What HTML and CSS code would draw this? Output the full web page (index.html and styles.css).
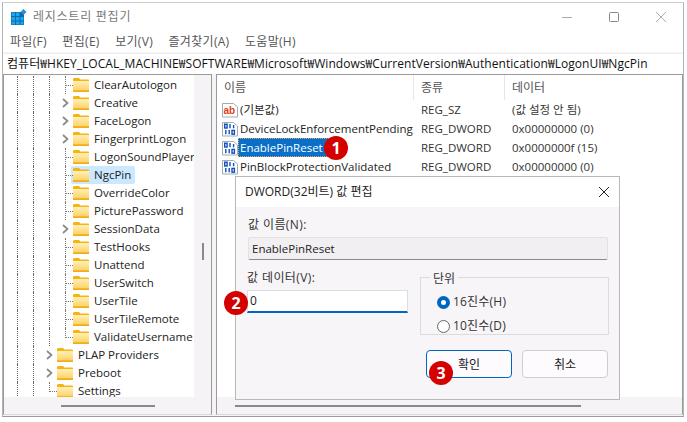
FILE: index.html
```html
<!DOCTYPE html>
<html lang="ko">
<head>
<meta charset="utf-8">
<title>레지스트리 편집기</title>
<link rel="stylesheet" href="styles.css">
</head>
<body>
<svg class="defs" width="0" height="0">
  <defs>
    <linearGradient id="fg" x1="0" y1="0" x2="0" y2="1"><stop offset="0" stop-color="#fff0b8"/><stop offset="1" stop-color="#fdd264"/></linearGradient>
    <symbol id="folder" viewBox="0 0 16 14">
      <path d="M0 1.5C0 .7.6 0 1.5 0H6l1.5 1.5H15c.6 0 1 .4 1 1V13c0 .6-.4 1-1 1H1c-.6 0-1-.4-1-1z" fill="#f5b510"/>
      <rect x="0" y="3" width="16" height="9.6" fill="url(#fg)"/>
      <rect x="0" y="12.4" width="16" height="1.6" fill="#f0ae1e"/>
    </symbol>
    <symbol id="bin" viewBox="0 0 16 16">
      <path d="M.5 1.5h11l4 3.5v10h-15z" fill="#fff" stroke="#a4a9b2"/>
      <g fill="none" stroke="#0f4fc0" stroke-width="1.4">
        <rect x="2.7" y="3.2" width="2.4" height="3.8"/><path d="M8 3v4.2M11.6 4v3.2"/>
        <path d="M3.8 9v4.2M7.2 9v4.2"/><rect x="10" y="9.4" width="2.4" height="3.8"/>
      </g>
    </symbol>
    <symbol id="chev" viewBox="0 0 12 18">
      <path d="M2 5l4.5 4L2 13" fill="none" stroke="#8a8a8a" stroke-width="1.7"/>
    </symbol>
  </defs>
</svg>

<div class="window">
  <header class="titlebar">
    <svg class="appicon" width="16" height="16" viewBox="0 0 16 16">
      <rect x="0" y="3" width="13" height="13" fill="#0b6aa8"/>
      <g fill="#1ba6ee">
        <rect x=".5" y="3.5" width="3.5" height="3.5"/><rect x="5" y="3.5" width="3.5" height="3.5"/>
        <rect x=".5" y="8" width="3.5" height="3.5"/><rect x="5" y="8" width="3.5" height="3.5"/><rect x="9.5" y="8" width="3" height="3.5"/>
        <rect x=".5" y="12.5" width="3.5" height="3"/><rect x="5" y="12.5" width="3.5" height="3"/><rect x="9.5" y="12.5" width="3" height="3"/>
      </g>
      <path d="M12.5 0l3 3-3 3-3-3z" fill="#2b8fd0"/>
    </svg>
    <span class="title">레지스트리 편집기</span>
    <div class="controls">
      <svg width="12" height="12" viewBox="0 0 12 12"><path d="M1 6.5h10" stroke="#aaa" fill="none"/></svg>
      <svg width="12" height="12" viewBox="0 0 12 12"><rect x="1.5" y="1.5" width="9" height="9" rx="1" stroke="#888" fill="none"/></svg>
      <svg width="12" height="12" viewBox="0 0 12 12"><path d="M1 1l10 10M11 1L1 11" stroke="#aaa" fill="none"/></svg>
    </div>
  </header>

  <nav class="menubar">
    <span>파일(F)</span><span>편집(E)</span><span>보기(V)</span><span>즐겨찾기(A)</span><span>도움말(H)</span>
  </nav>

  <div class="address">컴퓨터₩HKEY_LOCAL_MACHINE₩SOFTWARE₩Microsoft₩Windows₩CurrentVersion₩Authentication₩LogonUI₩NgcPin</div>

  <main class="panes">
    <section class="pane tree-pane">
      <div class="pane-body">
        <div class="tree">
          <div class="row"><i class="g"></i><i class="g"></i><i class="g"></i><i class="b"></i><svg class="fo"><use href="#folder"/></svg><span class="lb">ClearAutologon</span></div>
          <div class="row"><i class="g"></i><i class="g"></i><i class="g"></i><svg class="ch"><use href="#chev"/></svg><svg class="fo"><use href="#folder"/></svg><span class="lb">Creative</span></div>
          <div class="row"><i class="g"></i><i class="g"></i><i class="g"></i><svg class="ch"><use href="#chev"/></svg><svg class="fo"><use href="#folder"/></svg><span class="lb">FaceLogon</span></div>
          <div class="row"><i class="g"></i><i class="g"></i><i class="g"></i><svg class="ch"><use href="#chev"/></svg><svg class="fo"><use href="#folder"/></svg><span class="lb">FingerprintLogon</span></div>
          <div class="row"><i class="g"></i><i class="g"></i><i class="g"></i><i class="b"></i><svg class="fo"><use href="#folder"/></svg><span class="lb">LogonSoundPlayer</span></div>
          <div class="row"><i class="g"></i><i class="g"></i><i class="g"></i><i class="b"></i><span class="sel"><svg class="fo"><use href="#folder"/></svg><span class="lb">NgcPin</span></span></div>
          <div class="row"><i class="g"></i><i class="g"></i><i class="g"></i><i class="b"></i><svg class="fo"><use href="#folder"/></svg><span class="lb">OverrideColor</span></div>
          <div class="row"><i class="g"></i><i class="g"></i><i class="g"></i><i class="b"></i><svg class="fo"><use href="#folder"/></svg><span class="lb">PicturePassword</span></div>
          <div class="row"><i class="g"></i><i class="g"></i><i class="g"></i><svg class="ch"><use href="#chev"/></svg><svg class="fo"><use href="#folder"/></svg><span class="lb">SessionData</span></div>
          <div class="row"><i class="g"></i><i class="g"></i><i class="g"></i><i class="b"></i><svg class="fo"><use href="#folder"/></svg><span class="lb">TestHooks</span></div>
          <div class="row"><i class="g"></i><i class="g"></i><i class="g"></i><i class="b"></i><svg class="fo"><use href="#folder"/></svg><span class="lb">Unattend</span></div>
          <div class="row"><i class="g"></i><i class="g"></i><i class="g"></i><i class="b"></i><svg class="fo"><use href="#folder"/></svg><span class="lb">UserSwitch</span></div>
          <div class="row"><i class="g"></i><i class="g"></i><i class="g"></i><i class="b"></i><svg class="fo"><use href="#folder"/></svg><span class="lb">UserTile</span></div>
          <div class="row"><i class="g"></i><i class="g"></i><i class="g"></i><i class="b"></i><svg class="fo"><use href="#folder"/></svg><span class="lb">UserTileRemote</span></div>
          <div class="row"><i class="g"></i><i class="g"></i><i class="g"></i><i class="b last"></i><svg class="fo"><use href="#folder"/></svg><span class="lb">ValidateUsername</span></div>
          <div class="row"><i class="g"></i><i class="g"></i><svg class="ch"><use href="#chev"/></svg><svg class="fo"><use href="#folder"/></svg><span class="lb">PLAP Providers</span></div>
          <div class="row"><i class="g"></i><i class="g"></i><svg class="ch"><use href="#chev"/></svg><svg class="fo"><use href="#folder"/></svg><span class="lb">Preboot</span></div>
          <div class="row"><i class="g"></i><i class="g"></i><i class="b last"></i><svg class="fo"><use href="#folder"/></svg><span class="lb">Settings</span></div>
          <div class="row end"><i class="g"></i><i class="g"></i></div>
        </div>
        <div class="vtrack"><span class="vthumb"></span></div>
      </div>
      <div class="htrack tree-h"><span class="hthumb"></span></div>
    </section>

    <section class="pane list-pane">
      <div class="pane-body list">
        <div class="lhead">
          <span class="c1">이름</span><span class="c2">종류</span><span class="c3">데이터</span>
        </div>
        <div class="lrow">
          <span class="c1">
            <svg class="ic" viewBox="0 0 16 16"><path d="M.5 1.5h11l4 3.5v10h-15z" fill="#fff" stroke="#a4a9b2"/><text x="1.4" y="11.5" class="ab">ab</text></svg>
            <span class="nm">(기본값)</span>
          </span>
          <span class="c2">REG_SZ</span><span class="c3">(값 설정 안 됨)</span>
        </div>
        <div class="lrow">
          <span class="c1"><svg class="ic"><use href="#bin"/></svg><span class="nm">DeviceLockEnforcementPending</span></span>
          <span class="c2">REG_DWORD</span><span class="c3">0x00000000 (0)</span>
        </div>
        <div class="lrow">
          <span class="c1"><svg class="ic"><use href="#bin"/></svg><span class="nm picked">EnablePinReset</span></span>
          <span class="c2">REG_DWORD</span><span class="c3">0x0000000f (15)</span>
        </div>
        <div class="lrow">
          <span class="c1"><svg class="ic"><use href="#bin"/></svg><span class="nm">PinBlockProtectionValidated</span></span>
          <span class="c2">REG_DWORD</span><span class="c3">0x00000000 (0)</span>
        </div>
      </div>
      <div class="htrack list-h"><span class="hthumb"></span></div>
    </section>
  </main>

  <div class="dialog">
    <div class="dlg-title">
      <span>DWORD(32비트) 값 편집</span>
      <svg width="12" height="12" viewBox="0 0 12 12"><path d="M1 1l10 10M11 1L1 11" stroke="#222" fill="none"/></svg>
    </div>
    <div class="dlg-body">
      <label class="fld-label">값 이름(N):</label>
      <div class="name-input">EnablePinReset</div>
      <div class="dlg-mid">
        <div class="data-col">
          <label class="fld-label">값 데이터(V):</label>
          <div class="data-input">0</div>
        </div>
        <fieldset class="unit">
          <legend>단위</legend>
          <div class="radio"><i class="dot on"></i>16진수(H)</div>
          <div class="radio"><i class="dot"></i>10진수(D)</div>
        </fieldset>
      </div>
      <div class="btns">
        <button class="btn primary" type="button">확인</button>
        <button class="btn" type="button">취소</button>
      </div>
    </div>
  </div>

  <span class="badge b1">1</span>
  <span class="badge b2">2</span>
  <span class="badge b3">3</span>
</div>
</body>
</html>
```

FILE: styles.css
```css
* { box-sizing: border-box; }
html, body { margin: 0; padding: 0; background: #fff; }
body {
  width: 687px; height: 422px; overflow: hidden;
  font: 11.5px/18px "Open Sans", "Noto Sans CJK KR", sans-serif;
  color: #222;
}
.defs { position: absolute; }
.window {
  position: relative;
  width: 682px; height: 415px;
  margin: 2px 0 0 2px;
  border: 1px solid #9a9a9a;
  border-top-color: #cfcfcf;
  border-left-color: #b4b4b4;
  border-right-color: #b4b4b4;
  background: #f6f3f6;
  display: flex; flex-direction: column;
  overflow: hidden;
}
.titlebar {
  height: 28px; flex: none;
  display: flex; align-items: center;
  background: #fff;
  padding: 0 0 0 8px;
}
.appicon { flex: none; }
.title { margin-left: 6px; color: #7a7a7a; font-size: 12px; letter-spacing: .75px; }
.controls { margin-left: auto; display: flex; gap: 35px; padding-right: 16px; }
.menubar {
  height: 21px; flex: none; background: #fff;
  display: flex; align-items: center; gap: 15.5px;
  padding-left: 7px; color: #555; font-size: 12px; letter-spacing: .3px;
}
.address {
  height: 21px; flex: none;
  margin-top: 1px;
  background: #fff;
  padding-left: 4px;
  line-height: 20px; font-size: 12px; color: #111;
  letter-spacing: .05px;
  white-space: nowrap; overflow: hidden;
  border-top: 1px solid #f0edf0;
}
.panes { flex: 1; display: flex; gap: 4px; min-height: 0; padding-bottom: 1px; }
.pane {
  display: flex; flex-direction: column;
  border: 1px solid #9a9a9a;
  border-bottom-color: #d8d8d8;
  background: #f6f3f6;
  min-width: 0;
}
.tree-pane { width: 209px; flex: none; }
.list-pane { flex: 1; }
.pane-body { flex: 1; display: flex; min-height: 0; }
.tree { width: 190px; flex: none; background: #fff; padding-top: 1px; overflow: hidden; }
.row { height: 18px; display: flex; align-items: center; padding-left: 13px; white-space: nowrap; }
.row.end { height: 10px; }
.g { width: 16px; align-self: stretch; flex: none; border-left: 1px dotted #666; }
.b { width: 8px; align-self: stretch; flex: none; position: relative; }
.b::before { content: ""; position: absolute; left: 0; top: 0; height: 100%; border-left: 1px dotted #777; }
.b::after { content: ""; position: absolute; left: 0; top: 9px; width: 8px; border-top: 1px dotted #777; }
.b.last::before { height: 10px; }
.ch { width: 12px; height: 18px; flex: none; margin-left: -4px; }
.fo { width: 16px; height: 14px; flex: none; }
.lb { margin-left: 5px; }
.sel { display: flex; align-items: center; height: 18px; background: #cce8ff; border-radius: 2px; padding: 0 4px 0 2px; margin-left: -2px; }
.vtrack { flex: 1; background: #f6f3f6; position: relative; display: flex; justify-content: center; }
.vthumb { width: 2px; height: 17px; margin-top: 168px; background: #8a8a8a; }
.htrack { height: 17px; flex: none; background: #f6f3f6; display: flex; align-items: center; }
.hthumb { height: 2px; background: #8a8a8a; display: block; }
.tree-h { padding-left: 57px; }
.tree-h .hthumb { width: 94px; }
.list-h { padding-left: 18px; }
.list-h .hthumb { width: 346px; }

.list { flex-direction: column; background: #fff; }
.lhead { height: 25px; display: flex; align-items: center; color: #555; flex: none; font-size: 12px; }
.lhead span { align-self: stretch; display: flex; align-items: center; border-right: 1px solid #e6e6e6; padding-left: 7px; }
.lhead .c3 { border-right: 0; }
.c1 { width: 197px; flex: none; }
.c2 { width: 91px; flex: none; padding-left: 7px; }
.c3 { flex: 1; padding-left: 7px; }
.lrow { height: 19px; display: flex; align-items: center; color: #333; white-space: nowrap; }
.lrow .c1 { display: flex; align-items: center; padding-left: 5px; }
.ic { width: 16px; height: 16px; flex: none; }
.ab { font: bold 10px "Liberation Sans", sans-serif; fill: #e0401a; }
.nm { padding: 0 2px; color: #222; }
.picked { background: #0a6fc9; color: #fff; height: 19px; line-height: 19px; outline: 1px dotted #e9a04a; outline-offset: -1px; padding-right: 6px; }

.dialog {
  position: absolute; left: 232px; top: 173px;
  width: 385px; height: 224px;
  border: 1px solid #b8b8b8;
  background: #f6f3f6;
  display: flex; flex-direction: column;
}
.dlg-title {
  height: 30px; flex: none; background: #fff;
  display: flex; align-items: center; justify-content: space-between;
  padding: 0 9px 0 9px; color: #222; font-size: 12px;
}
.dlg-body { flex: 1; padding: 9px 11px 0 12px; background: #f8f5f8; }
.fld-label { display: block; color: #333; font-size: 12px; line-height: 18px; letter-spacing: .4px; }
.name-input {
  height: 23px; margin-top: 3px;
  background: #f2eff2; border: 1px solid #e4e1e4; border-bottom-color: #8a8a8a;
  border-radius: 2px; padding-left: 3px; line-height: 21px; color: #222;
}
.dlg-mid { display: flex; gap: 12px; margin-top: 9px; }
.data-col { width: 161px; flex: none; margin-left: -1px; }
.data-input {
  height: 23px; margin-top: 3px;
  background: #fff; border: 1px solid #dcdce6; border-bottom: 2px solid #0067c0;
  padding-left: 2px; line-height: 20px; color: #222; font-size: 12px;
}
.unit {
  flex: 1; margin: 0 -1px 0 0; padding: 4px 0 0 16px;
  height: 66px;
  border: 1px solid #dddadd;
}
.unit legend { padding: 3px 3px 0; margin-left: -7px; line-height: 14px; color: #333; font-size: 12px; }
.radio { display: flex; align-items: center; gap: 3px; height: 24px; color: #333; font-size: 12px; letter-spacing: .2px; }
.dot { width: 13px; height: 13px; border-radius: 50%; border: 1px solid #666; background: #fff; flex: none; }
.dot.on { border: 4px solid #0067c0; }
.btns { display: flex; gap: 10px; margin-top: 15px; padding-left: 178px; }
.btn {
  width: 86px; height: 28px; padding: 0;
  font: 12px "Open Sans", "Noto Sans CJK KR", sans-serif; color: #222;
  background: #fdfbfd; border: 1px solid #cfcdcf; border-radius: 4px;
}
.btn.primary { border-color: #0067c0; }

.badge {
  position: absolute; width: 24px; height: 24px; border-radius: 50%;
  background: #d40000; color: #fff;
  font: bold 16px/24px "Open Sans", sans-serif; text-align: center;
}
.b1 { left: 321px; top: 133px; }
.b2 { left: 221px; top: 288px; }
.b3 { left: 426px; top: 358px; }
```
